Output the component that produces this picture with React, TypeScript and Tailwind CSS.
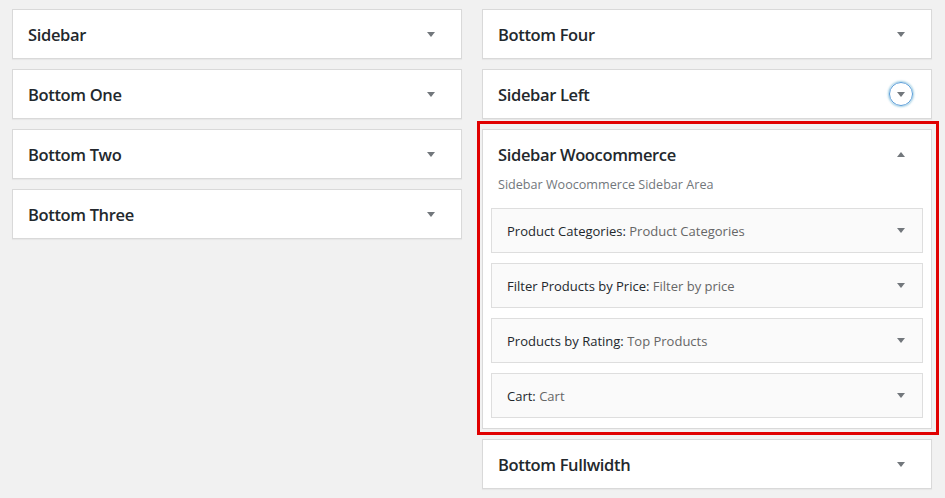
import React from "react";

const font = { fontFamily: '"Open Sans", "Noto Sans", Arial, sans-serif' };

function Arrow({ up = false }: { up?: boolean }) {
  return (
    <svg width="8" height="5" viewBox="0 0 8 5" className="block">
      {up ? <path d="M0 5 L4 0 L8 5 Z" fill="#72777c" /> : <path d="M0 0 L8 0 L4 5 Z" fill="#72777c" />}
    </svg>
  );
}

function SidebarCard({ title, focused = false }: { title: string; focused?: boolean }) {
  return (
    <div className="h-[50px] w-[450px] border border-[#d9d9d9] bg-white flex items-center justify-between pl-[15px] pr-[18px] shadow-[0_1px_1px_rgba(0,0,0,0.04)]">
      <h2 className="mt-[2px] text-[16.5px] font-semibold text-[#23282d] tracking-[-0.35px]">{title}</h2>
      {focused ? (
        <div className="w-[24px] h-[24px] rounded-full border border-[#5b9dd9] shadow-[0_0_2px_1px_rgba(30,140,190,0.4)] flex items-center justify-center">
          <Arrow />
        </div>
      ) : (
        <div className="w-[24px] h-[24px] flex items-center justify-center">
          <Arrow />
        </div>
      )}
    </div>
  );
}

function Widget({ name, title }: { name: string; title: string }) {
  return (
    <div className="h-[45px] border border-[#dedede] bg-[#fafafa] flex items-center justify-between pl-[15px] pr-[17px]">
      <div className="mt-[2px] text-[13px] text-[#23282d]">
        <span className="font-medium">{name}:</span> <span className="text-[#666]">{title}</span>
      </div>
      <Arrow />
    </div>
  );
}

export default function App() {
  return (
    <div className="w-[945px] h-[498px] bg-[#f1f1f1] overflow-hidden" style={font}>
      <div className="flex gap-[20px] pl-[12px] pt-[9px]">
        <div className="flex flex-col gap-[10px]">
          <SidebarCard title="Sidebar" />
          <SidebarCard title="Bottom One" />
          <SidebarCard title="Bottom Two" />
          <SidebarCard title="Bottom Three" />
        </div>
        <div className="flex flex-col gap-[10px]">
          <SidebarCard title="Bottom Four" />
          <SidebarCard title="Sidebar Left" focused />
          <div className="relative w-[450px] h-[300px] border border-[#d9d9d9] bg-white">
            <div className="h-[48px] flex items-center justify-between pl-[15px] pr-[18px]">
              <h2 className="mt-[2px] text-[16.5px] font-semibold text-[#23282d] tracking-[-0.35px]">Sidebar Woocommerce</h2>
              <div className="w-[24px] h-[24px] flex items-center justify-center">
                <Arrow up />
              </div>
            </div>
            <p className="-mt-[2px] px-[15px] text-[12.6px] leading-[18px] text-[#72777c]">Sidebar Woocommerce Sidebar Area</p>
            <div className="pt-[14px] px-[8px] flex flex-col gap-[10px]">
              <Widget name="Product Categories" title="Product Categories" />
              <Widget name="Filter Products by Price" title="Filter by price" />
              <Widget name="Products by Rating" title="Top Products" />
              <Widget name="Cart" title="Cart" />
            </div>
            <div className="absolute -left-[6px] -top-[9px] -right-[8px] -bottom-[7px] border-[3px] border-[#e00000] pointer-events-none" />
          </div>
          <SidebarCard title="Bottom Fullwidth" />
        </div>
      </div>
    </div>
  );
}
